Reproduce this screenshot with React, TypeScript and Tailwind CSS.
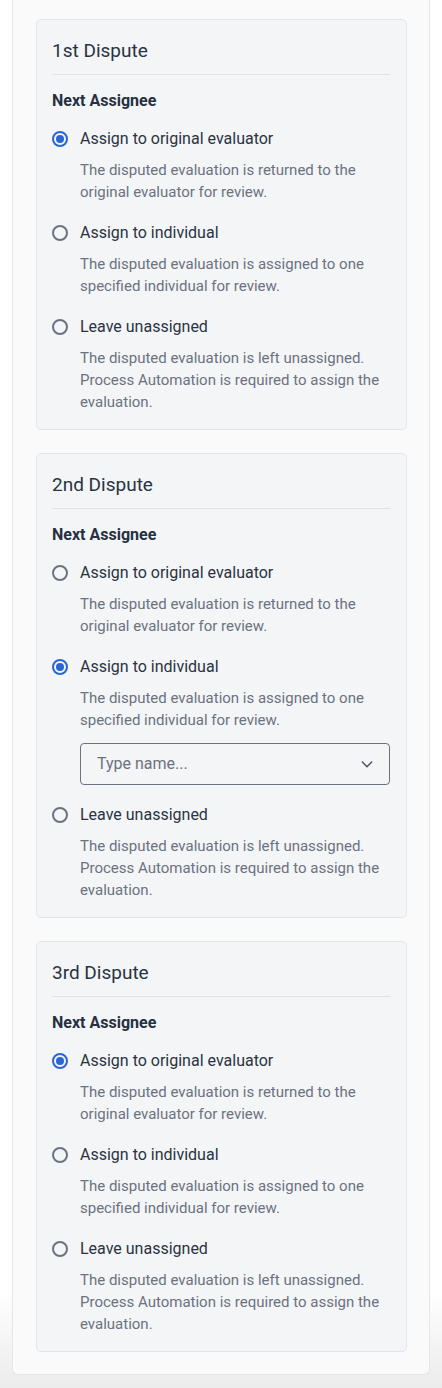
import React from "react";

type Opt = { label: string; desc: string };
const OPTS: Opt[] = [
  { label: "Assign to original evaluator", desc: "The disputed evaluation is returned to the original evaluator for review." },
  { label: "Assign to individual", desc: "The disputed evaluation is assigned to one specified individual for review." },
  { label: "Leave unassigned", desc: "The disputed evaluation is left unassigned. Process Automation is required to assign the evaluation." },
];

function Radio({ checked }: { checked: boolean }) {
  return (
    <span
      className={
        checked
          ? "flex h-[16px] w-[16px] shrink-0 items-center justify-center rounded-full border-2 border-[#2b64d6]"
          : "flex h-[16px] w-[16px] shrink-0 items-center justify-center rounded-full border-2 border-[#6b7280]"
      }
    >
      {checked && <span className="h-[8px] w-[8px] rounded-full bg-[#2b64d6]" />}
    </span>
  );
}

function Card({ title, selected }: { title: string; selected: number }) {
  return (
    <div className="rounded-[5px] border border-[#e2e5ea] bg-[#f4f5f7] pl-[15px] pr-[16px] pt-[17px] pb-4">
      <div className="border-b border-[#e0e3e8] pb-[9px] text-[19px] leading-[28px] text-[#2a3342]">{title}</div>
      <div className="mt-4 text-[16px] font-bold leading-[20px] text-[#263041]">Next Assignee</div>
      <div className="mt-4 flex flex-col gap-[18px]">
        {OPTS.map((o, i) => (
          <div key={i}>
            <div className="flex items-center gap-3">
              <Radio checked={i === selected} />
              <span className="text-[16px] leading-[24px] text-[#2a3342]">{o.label}</span>
            </div>
            <div className="mt-2 pl-7 text-[15px] leading-[22px] text-[#6b7280]">{o.desc}</div>
            {i === 1 && selected === 1 && (
              <div className="ml-7 mt-3 flex h-[42px] items-center justify-between rounded-[4px] border border-[#6b7280] bg-[#f4f5f7] pl-4 pr-[14px]">
                <span className="text-[16px] text-[#6b7280]">Type name...</span>
                <svg width="16" height="16" viewBox="0 0 24 24" fill="none" stroke="#4b5563" strokeWidth="2.2" strokeLinecap="round" strokeLinejoin="round">
                  <path d="M5 9l7 7 7-7" />
                </svg>
              </div>
            )}
          </div>
        ))}
      </div>
    </div>
  );
}

export default function App() {
  return (
    <div
      className="min-h-[1388px] w-[442px] bg-[linear-gradient(to_bottom,#ffffff_calc(100%-100px),#ebebeb)] pb-[15px]"
      style={{ fontFamily: "Roboto, 'Noto Sans', sans-serif" }}
    >
      <div className="mx-3 flex flex-col gap-[23px] rounded-b-[6px] border-x border-b border-[#e3e6eb] bg-[#fafafa] pl-[23px] pr-[22px] pt-[19px] pb-[22px]">
        <Card title="1st Dispute" selected={0} />
        <Card title="2nd Dispute" selected={1} />
        <Card title="3rd Dispute" selected={0} />
      </div>
    </div>
  );
}
